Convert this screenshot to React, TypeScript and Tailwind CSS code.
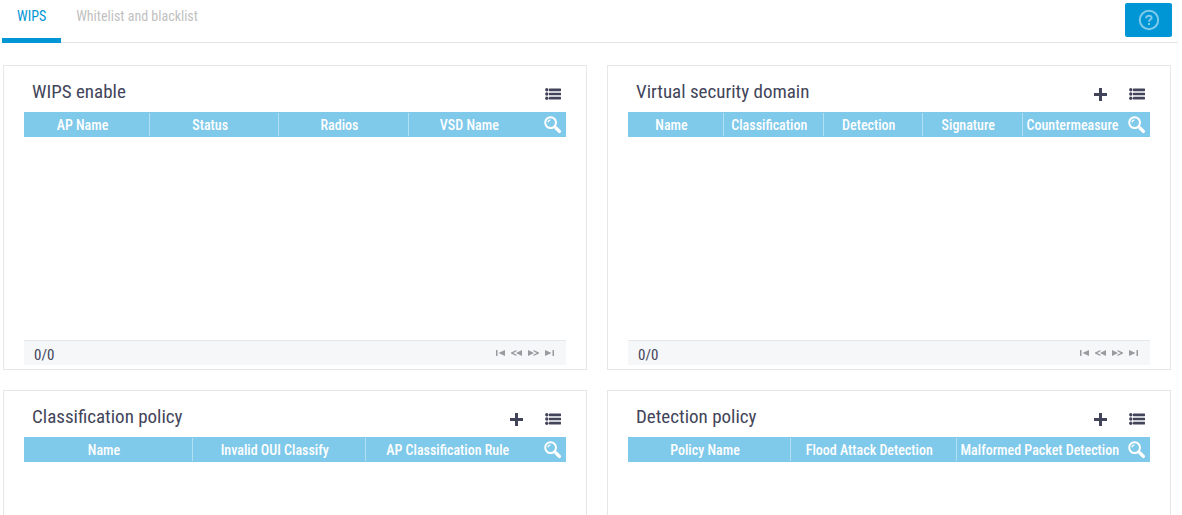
import React, { useState } from 'react';

interface Column {
  label: string;
  width?: string;
}

interface Panel {
  title: string;
  columns: Column[];
  canAdd: boolean;
  total?: string;
}

const tabs = ['WIPS', 'Whitelist and blacklist'];

const panels: Panel[] = [
  {
    title: 'WIPS enable',
    canAdd: false,
    total: '0/0',
    columns: [{ label: 'AP Name', width: 'w-[126px]' }, { label: 'Status' }, { label: 'Radios' }, { label: 'VSD Name' }],
  },
  {
    title: 'Virtual security domain',
    canAdd: true,
    total: '0/0',
    columns: [
      { label: 'Name', width: 'w-24' },
      { label: 'Classification' },
      { label: 'Detection' },
      { label: 'Signature' },
      { label: 'Countermeasure' },
    ],
  },
  {
    title: 'Classification policy',
    canAdd: true,
    columns: [{ label: 'Name', width: 'w-[169px]' }, { label: 'Invalid OUI Classify' }, { label: 'AP Classification Rule' }],
  },
  {
    title: 'Detection policy',
    canAdd: true,
    columns: [
      { label: 'Policy Name', width: 'w-[163px]' },
      { label: 'Flood Attack Detection' },
      { label: 'Malformed Packet Detection' },
    ],
  },
];

const HelpIcon = () => (
  <svg width="22" height="22" viewBox="0 0 22 22" fill="none" stroke="currentColor" strokeWidth="2">
    <circle cx="11" cy="11" r="9.2" />
    <path d="M8.3 9.2V8.6c0-1.2 1-1.9 2.6-1.9 1.7 0 2.7.7 2.7 2 0 2-2.6 1.7-2.6 4" />
    <path d="M11 13.9v2.1" />
  </svg>
);

const PlusIcon = () => (
  <svg width="13" height="13" viewBox="0 0 13 13" fill="currentColor">
    <path d="M5 0h3v5h5v3H8v5H5V8H0V5h5z" />
  </svg>
);

const ListIcon = () => (
  <svg width="17" height="12" viewBox="0 0 17 12" fill="currentColor">
    <circle cx="1.8" cy="1.8" r="1.7" />
    <circle cx="1.8" cy="6" r="1.7" />
    <circle cx="1.8" cy="10.2" r="1.7" />
    <rect x="4" y="0.6" width="12" height="2.6" rx="0.4" />
    <rect x="4" y="4.7" width="12" height="2.6" rx="0.4" />
    <rect x="4" y="8.8" width="12" height="2.6" rx="0.4" />
  </svg>
);

const SearchIcon = () => (
  <svg width="18" height="18" viewBox="0 0 18 18" fill="none" stroke="currentColor">
    <circle cx="6.6" cy="6.6" r="5.4" strokeWidth="2" />
    <path d="M3.9 6.4a3 3 0 0 1 2.5-2.5" strokeWidth="1.2" />
    <path d="M10.6 10.6l1.5 1.5" strokeWidth="2" />
    <path d="M12 12l3.4 3.4" strokeWidth="3.4" strokeLinecap="round" />
  </svg>
);

const pagerIcons = [
  { label: 'First page', width: 9, d: 'M0 1h1.5v6H0zM9 1v6L2.5 4z' },
  { label: 'Previous page', width: 11, d: 'M11 1v6L5 4zM5.5 1v1.3L2.3 4l3.2 1.7V7L0 4.5v-1z' },
  { label: 'Next page', width: 11, d: 'M0 1v6l6-3zM5.5 1v1.3L8.7 4 5.5 5.7V7L11 4.5v-1z' },
  { label: 'Last page', width: 9, d: 'M7.5 1H9v6H7.5zM0 1v6l6.5-3z' },
];

const PanelCard: React.FC<{ panel: Panel }> = ({ panel }) => (
  <section className="border border-[#e5e7e8] px-5 pb-1">
    <div className="flex h-[46px] items-center justify-between pl-2 pr-1 pt-2.5">
      <h2 className="-mt-1 text-[19px] leading-5">{panel.title}</h2>
      <div className="flex items-center gap-[22px]">
        {panel.canAdd && (
          <button type="button" aria-label={`Add to ${panel.title}`} className="cursor-pointer">
            <PlusIcon />
          </button>
        )}
        <button type="button" aria-label={`${panel.title} details`} className="cursor-pointer">
          <ListIcon />
        </button>
      </div>
    </div>

    <div className="min-h-[228px]">
      <table className="w-full table-fixed border-collapse bg-[#7fc9ea] text-sm text-white">
        <thead>
          <tr>
            {panel.columns.map((col, i) => (
              <th key={col.label} className={`${col.width ?? ''} p-0 py-px font-medium`}>
                <div
                  className={`flex h-[23px] items-center whitespace-nowrap pl-1 pr-3 pt-px ${
                    i < panel.columns.length - 1 ? 'border-r border-[#b2dff2]' : ''
                  }`}
                >
                  <span className="mx-auto">{col.label}</span>
                </div>
              </th>
            ))}
            <th className="w-7 p-0">
              <button type="button" aria-label={`Search ${panel.title}`} className="flex cursor-pointer pl-1.5">
                <SearchIcon />
              </button>
            </th>
          </tr>
        </thead>
      </table>
    </div>

    {panel.total && (
      <div className="flex h-[25px] items-center justify-between border-t border-[#e5e7e8] bg-[#f5f7f9] pl-2.5 pr-3">
        <span className="pt-1 text-[15px] leading-5">{panel.total}</span>
        <div className="flex items-center gap-1.5 text-[#999b9e]">
          {pagerIcons.map((icon) => (
            <button key={icon.label} type="button" aria-label={icon.label} className="cursor-pointer">
              <svg width={icon.width} height="8" viewBox={`0 0 ${icon.width} 8`} fill="currentColor">
                <path d={icon.d} />
              </svg>
            </button>
          ))}
        </div>
      </div>
    )}
  </section>
);

const App: React.FC = () => {
  const [active, setActive] = useState(tabs[0]);

  return (
    <div className="min-h-screen bg-white font-['Roboto_Condensed','Liberation_Sans_Narrow','Roboto',sans-serif] text-[#42455a]">
      {/* Tab bar */}
      <header className="ml-0.5 mr-1 flex h-[43px] justify-between border-b border-[#e3e5e5] pr-1.5">
        <nav className="-mb-px flex">
          {tabs.map((tab) => (
            <button
              key={tab}
              type="button"
              onClick={() => setActive(tab)}
              className={`cursor-pointer border-b-[5px] px-[15px] pb-1.5 text-sm ${
                active === tab ? 'border-[#0096d6] text-[#0096d6]' : 'border-transparent text-[#bfc1c1]'
              }`}
            >
              {tab}
            </button>
          ))}
        </nav>
        <button
          type="button"
          aria-label="Help"
          className="mt-[3px] flex h-[34px] w-[47px] cursor-pointer items-center justify-center rounded-xs bg-[#0096d6] text-[#80caea]"
        >
          <HelpIcon />
        </button>
      </header>

      {/* Panels */}
      <main className="grid grid-cols-[584fr_564fr] gap-5 pb-5 pl-[3px] pr-[11px] pt-[22px]">
        {panels.map((panel) => (
          <PanelCard key={panel.title} panel={panel} />
        ))}
      </main>
    </div>
  );
};

export default App;
